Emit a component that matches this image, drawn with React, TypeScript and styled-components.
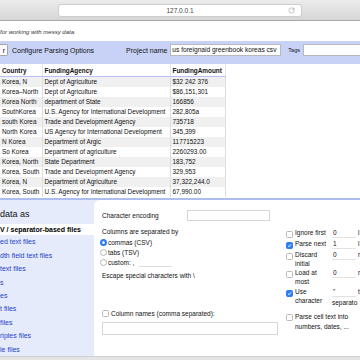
import React from 'react';
import styled, { createGlobalStyle } from 'styled-components';
import { RotateCw } from 'lucide-react';

const rows = [
    ['Korea, N', 'Dept of Agriculture', '$32 242 376'],
    ['Korea–North', 'Dept of Agriculture', '$86,151,301'],
    ['Korea North', 'department of State', '166856'],
    ['SouthKorea', 'U.S. Agency for International Development', '282,805a'],
    ['south Korea', 'Trade and Development Agency', '735718'],
    ['North Korea', 'US Agency for International Development', '345,399'],
    ['N Korea', 'Department of Argic', '117715223'],
    ['So Korea', 'Department of agriculture', '2260293.00'],
    ['Korea, North', 'State Department', '183,752'],
    ['Korea, South', 'Trade and Development Agency', '329,953'],
    ['Korea, N', 'Department of Agriculture', '37,322,244.0'],
    ['Korea, South', 'U.S. Agency for International Development', '67,990.00'],
];

// the page is scrolled sideways, so only the tail of each format name shows
const formats = [
    'ed text files',
    'dth field text files',
    'text files',
    's',
    'es',
    't files',
    'files',
    'riples files',
    'le files',
];

const GlobalStyle = createGlobalStyle`
    html, body {
        margin: 0;
        padding: 0;
    }
    body {
        width: 360px;
        height: 360px;
        overflow: hidden;
        background: #fff;
        font-family: "Liberation Sans", Arial, sans-serif;
        color: #111;
    }
`;

const Check: React.FC<{ checked?: boolean }> = ({ checked }) => (
    <StyledCheck $checked={checked}>
        {checked && (
            <svg width="5" height="5" viewBox="0 0 10 10">
                <path d="M2 5.5 L4.2 7.6 L8 2.6" fill="none" stroke="#fff" strokeWidth="1.8" />
            </svg>
        )}
    </StyledCheck>
);

const App: React.FC = () => {
    return (
        <Window>
            <GlobalStyle />
            <Toolbar>
                <UrlBar>
                    <span />
                    <UrlText>127.0.0.1</UrlText>
                    <ReloadIcon size={7} strokeWidth={1.6} />
                </UrlBar>
            </Toolbar>

            <Page>
                <Tagline>for working with messy data.</Tagline>

                <HeaderBar>
                    <StartOver>r</StartOver>
                    <Title>Configure Parsing Options</Title>
                    <ProjectLabel>Project name</ProjectLabel>
                    <ProjectInput>us foreignaid greenbook koreas csv</ProjectInput>
                    <TagsLabel>Tags</TagsLabel>
                    <TagsInput />
                </HeaderBar>

                <DataTable>
                    <colgroup>
                        <col style={{ width: 42 }} />
                        <col style={{ width: 128 }} />
                        <col style={{ width: 55 }} />
                    </colgroup>
                    <thead>
                        <tr>
                            <HeadCell>Country</HeadCell>
                            <HeadCell>FundingAgency</HeadCell>
                            <HeadCell>FundingAmount</HeadCell>
                        </tr>
                    </thead>
                    <tbody>
                        {rows.map((row, i) => (
                            <DataRow key={i} $odd={i % 2 === 0}>
                                {row.map((cell, j) => (
                                    <DataCell key={j}>{cell}</DataCell>
                                ))}
                            </DataRow>
                        ))}
                    </tbody>
                </DataTable>

                <Bottom>
                    <FormatList>
                        <FormatHeading>data as</FormatHeading>
                        <FormatSelected>V / separator-based files</FormatSelected>
                        {formats.map((f) => (
                            <FormatLink key={f}>{f}</FormatLink>
                        ))}
                    </FormatList>

                    <OptionsPanel>
                        <OptionsLeft>
                            <EncodingRow>
                                <EncodingLabel>Character encoding</EncodingLabel>
                                <BoxInput $width={83} $height={11} />
                            </EncodingRow>
                            <SectionTitle>Columns are separated by</SectionTitle>
                            <RadioRow>
                                <Radio $checked />
                                commas (CSV)
                            </RadioRow>
                            <RadioRow>
                                <Radio />
                                tabs (TSV)
                            </RadioRow>
                            <RadioRow>
                                <Radio />
                                custom: ,
                                <CustomInput />
                            </RadioRow>
                            <EscapeRow>Escape special characters with \</EscapeRow>
                            <ColumnNamesRow>
                                <Check />
                                Column names (comma separated):
                            </ColumnNamesRow>
                            <BoxInput $width={176} $height={13} />
                        </OptionsLeft>

                        <OptionsRight>
                            <OptionRow $height={11}>
                                <Check />
                                <OptionLabel>Ignore first</OptionLabel>
                                <ValueCell>
                                    <ValueInput>0</ValueInput>
                                    <Unit>l</Unit>
                                </ValueCell>
                            </OptionRow>
                            <OptionRow $height={11}>
                                <Check checked />
                                <OptionLabel>Parse next</OptionLabel>
                                <ValueCell>
                                    <ValueInput>1</ValueInput>
                                    <Unit>l</Unit>
                                </ValueCell>
                            </OptionRow>
                            <OptionRow $height={18}>
                                <Check />
                                <OptionLabel>Discard initial</OptionLabel>
                                <ValueCell>
                                    <ValueInput>0</ValueInput>
                                    <Unit>r</Unit>
                                </ValueCell>
                            </OptionRow>
                            <OptionRow $height={19}>
                                <Check />
                                <OptionLabel>Load at most</OptionLabel>
                                <ValueCell>
                                    <ValueInput>0</ValueInput>
                                    <Unit>r</Unit>
                                </ValueCell>
                            </OptionRow>
                            <OptionRow $height={19}>
                                <Check checked />
                                <OptionLabel>Use character</OptionLabel>
                                <ValueCell>
                                    <ValueInput>"</ValueInput>
                                    <Unit>t</Unit>
                                    <Wrapped>separato</Wrapped>
                                </ValueCell>
                            </OptionRow>
                            <ParseRow>
                                <Check />
                                <ParseLabel>Parse cell text into numbers, dates, ...</ParseLabel>
                            </ParseRow>
                        </OptionsRight>
                    </OptionsPanel>
                </Bottom>
                <ScrollStrip />
            </Page>
        </Window>
    );
};

const Window = styled.div`
    width: 360px;
    height: 360px;
    overflow: hidden;
    display: flex;
    flex-direction: column;
`;

const Toolbar = styled.div`
    height: 21px;
    flex: none;
    box-sizing: border-box;
    background: linear-gradient(#ececec, #d6d6d6);
    border-bottom: 1px solid #a9a9a9;
    display: flex;
    align-items: center;
    padding-left: 58px;
`;

const UrlBar = styled.div`
    width: 244px;
    height: 13px;
    box-sizing: border-box;
    background: #fff;
    border: 1px solid #cdcdcd;
    border-radius: 3px;
    display: grid;
    grid-template-columns: 1fr auto 1fr;
    align-items: center;
    padding: 0 6px;
`;

const UrlText = styled.span`
    font-size: 6.5px;
    color: #444;
`;

const ReloadIcon = styled(RotateCw)`
    justify-self: end;
    color: #8a8a8a;
`;

const Page = styled.div`
    flex: 1;
    display: flex;
    flex-direction: column;
    min-height: 0;
`;

const Tagline = styled.div`
    height: 20px;
    flex: none;
    display: flex;
    align-items: center;
    padding-top: 2px;
    box-sizing: border-box;
    font-size: 6px;
    font-style: italic;
    color: #333;
`;

const HeaderBar = styled.div`
    height: 23px;
    flex: none;
    background: #c8d2f6;
    display: flex;
    align-items: center;
    padding-bottom: 5px;
    box-sizing: border-box;
    font-size: 7px;
    color: #111;
    white-space: nowrap;
    & > * {
        flex: none;
    }
`;

const StartOver = styled.div`
    height: 12px;
    width: 8px;
    box-sizing: border-box;
    background: #fbfbfb;
    border: 1px solid #a4a4a4;
    border-left: none;
    border-radius: 0 2px 2px 0;
    display: flex;
    align-items: center;
    justify-content: flex-end;
    padding-right: 2px;
`;

const Title = styled.span`
    margin-left: 4px;
`;

const ProjectLabel = styled.span`
    margin-left: 32px;
`;

const ProjectInput = styled.div`
    margin-left: 3px;
    width: 111px;
    height: 12px;
    box-sizing: border-box;
    background: #fff;
    border: 1px solid #b9b9b9;
    padding: 0 1px;
    font-size: 6.6px;
    line-height: 10px;
    overflow: hidden;
    white-space: nowrap;
`;

const TagsLabel = styled.span`
    margin-left: 7px;
    font-size: 5.5px;
`;

const TagsInput = styled.div`
    margin-left: 3px;
    width: 70px;
    height: 12px;
    box-sizing: border-box;
    background: #fff;
    border: 1px solid #b9b9b9;
`;

const DataTable = styled.table`
    flex: none;
    width: 225px;
    table-layout: fixed;
    border-collapse: collapse;
    font-size: 6.4px;
    color: #111;
`;

const HeadCell = styled.th`
    height: 12px;
    padding: 0 2px;
    text-align: left;
    font-weight: bold;
    border-bottom: 1px solid #b6c3f2;
    border-right: 1px solid #e4e4e4;
    white-space: nowrap;
    overflow: hidden;
`;

const DataRow = styled.tr<{ $odd?: boolean }>`
    background: ${(p) => (p.$odd ? '#f0f0f0' : '#fff')};
`;

const DataCell = styled.td`
    height: 10px;
    padding: 0 2px;
    line-height: 10px;
    border-right: 1px solid #dedede;
    white-space: nowrap;
    overflow: hidden;
`;

const Bottom = styled.div`
    flex: 1;
    min-height: 0;
    margin-top: 1px;
    display: flex;
    background: #e6ebfc;
    border-top: 2px solid #aebdf0;
`;

const FormatList = styled.div`
    width: 94px;
    flex: none;
    display: flex;
    flex-direction: column;
    font-size: 7px;
    white-space: nowrap;
`;

const FormatHeading = styled.div`
    height: 30px;
    padding-top: 9px;
    box-sizing: border-box;
    font-size: 9px;
    line-height: 10px;
    color: #111;
`;

const FormatSelected = styled.div`
    height: 11px;
    line-height: 11px;
    background: #fff;
    font-weight: bold;
    color: #000;
`;

const FormatLink = styled.div`
    height: 13.4px;
    line-height: 13.4px;
    color: #2342c8;
`;

const OptionsPanel = styled.div`
    flex: 1;
    background: #fff;
    border-top-left-radius: 6px;
    display: flex;
    padding-left: 8px;
    font-size: 6.5px;
    color: #111;
    white-space: nowrap;
`;

const OptionsLeft = styled.div`
    width: 184px;
    flex: none;
    display: flex;
    flex-direction: column;
    padding-top: 10px;
`;

const EncodingRow = styled.div`
    display: flex;
    align-items: center;
    height: 11px;
`;

const EncodingLabel = styled.span`
    width: 85px;
`;

const BoxInput = styled.div<{ $width: number; $height: number }>`
    width: ${(p) => p.$width}px;
    height: ${(p) => p.$height}px;
    box-sizing: border-box;
    border: 1px solid #d6d6d6;
    background: #fff;
`;

const SectionTitle = styled.div`
    margin-top: 6px;
    height: 10px;
    line-height: 10px;
`;

const RadioRow = styled.div`
    height: 10px;
    display: flex;
    align-items: center;
    margin-left: -2px;
`;

const Radio = styled.span<{ $checked?: boolean }>`
    width: 7px;
    height: 7px;
    box-sizing: border-box;
    border-radius: 50%;
    margin-right: 1px;
    background: ${(p) => (p.$checked ? '#2e7cf6' : '#fff')};
    border: ${(p) => (p.$checked ? '2.2px solid #2e7cf6' : '1px solid #b5b5b5')};
    box-shadow: ${(p) => (p.$checked ? 'inset 0 0 0 1.5px #fff' : 'none')};
`;

const CustomInput = styled.span`
    width: 33px;
    height: 8px;
    margin-left: 5px;
    border-bottom: 1px solid #dedede;
`;

const EscapeRow = styled.div`
    margin-top: 4px;
    height: 10px;
    line-height: 10px;
`;

const ColumnNamesRow = styled.div`
    margin-top: 27px;
    height: 10px;
    display: flex;
    align-items: center;
    margin-bottom: 4px;
`;

const StyledCheck = styled.span<{ $checked?: boolean }>`
    width: 7px;
    height: 7px;
    flex: none;
    box-sizing: border-box;
    border-radius: 1.5px;
    margin-right: 2px;
    display: flex;
    align-items: center;
    justify-content: center;
    background: ${(p) => (p.$checked ? '#2e7cf6' : '#fff')};
    border: 1px solid ${(p) => (p.$checked ? '#2e7cf6' : '#b8b8b8')};
`;

const OptionsRight = styled.div`
    flex: 1;
    display: flex;
    flex-direction: column;
    padding-top: 28px;
`;

const OptionRow = styled.div<{ $height: number }>`
    height: ${(p) => p.$height}px;
    display: grid;
    grid-template-columns: 9px 37px auto;
    align-items: start;
    padding-top: 1px;
    box-sizing: border-box;
    & > span:first-child {
        margin-top: 1.5px;
    }
`;

const OptionLabel = styled.span`
    white-space: normal;
    line-height: 8.8px;
`;

const ValueCell = styled.div`
    display: flex;
    flex-wrap: wrap;
    align-items: center;
    width: 40px;
    line-height: 8.8px;
`;

const ValueInput = styled.span`
    width: 24px;
    height: 9px;
    box-sizing: border-box;
    padding-left: 1px;
    border-bottom: 1px solid #e2e2e2;
`;

const Unit = styled.span`
    margin-left: 2px;
`;

const Wrapped = styled.span`
    width: 40px;
    margin-top: 2px;
`;

const ParseRow = styled.div`
    margin-top: 6px;
    display: grid;
    grid-template-columns: 9px 70px;
    align-items: start;
    & > span:first-child {
        margin-top: 1.5px;
    }
`;

const ParseLabel = styled.span`
    white-space: normal;
    line-height: 10px;
`;

const ScrollStrip = styled.div`
    height: 3px;
    flex: none;
    background: #e4e4e4;
    border-top: 1px solid #d0d0d0;
`;

export default App;
